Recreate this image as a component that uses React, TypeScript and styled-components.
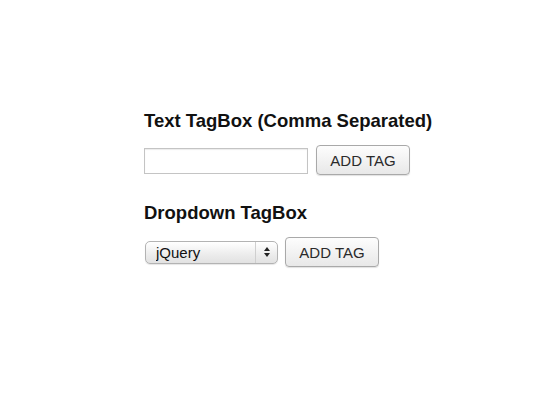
import React from 'react';
import styled, { createGlobalStyle } from 'styled-components';

const GlobalStyle = createGlobalStyle`
  html, body {
    margin: 0;
    padding: 0;
    background: #ffffff;
  }
  body {
    font-family: "Liberation Sans", Arial, Helvetica, sans-serif;
  }
`;

export default function App() {
  return (
    <Page>
      <GlobalStyle />
      <Section>
        <Title>Text TagBox (Comma Separated)</Title>
        <Row>
          <TextInput type="text" />
          <Button $offset={1}>ADD TAG</Button>
        </Row>
      </Section>
      <Section>
        <Title>Dropdown TagBox</Title>
        <Row>
          <SelectWrap>
            <Select defaultValue="jquery">
              <option value="jquery">jQuery</option>
              <option value="react">React</option>
            </Select>
            <Arrows>
              <svg width="8" height="12" viewBox="0 0 8 12">
                <path d="M4 1 L7 5 H1 Z" fill="#222" />
                <path d="M4 11 L7 7 H1 Z" fill="#222" />
              </svg>
            </Arrows>
          </SelectWrap>
          <Button $offset={0}>ADD TAG</Button>
        </Row>
      </Section>
    </Page>
  );
}

const Page = styled.div`
  width: 560px;
  height: 400px;
  box-sizing: border-box;
  padding: 110px 0 0 144px;
  display: flex;
  flex-direction: column;
  gap: 27px;
`;

const Section = styled.div`
  display: flex;
  flex-direction: column;
  gap: 13px;
`;

const Title = styled.h2`
  margin: 0;
  font-size: 18.5px;
  line-height: 22px;
  font-weight: 700;
  color: #111;
`;

const Row = styled.div`
  display: flex;
  align-items: center;
  gap: 7px;
`;

const TextInput = styled.input`
  width: 164px;
  height: 26px;
  margin-top: 1px;
  box-sizing: border-box;
  border: 1px solid #c4c4c4;
  box-shadow: inset 0 1px 1px rgba(0, 0, 0, 0.08);
  padding: 2px 4px;
  font-size: 13px;
  outline: none;
`;

const Button = styled.button<{ $offset: number }>`
  width: 94px;
  height: 30px;
  box-sizing: border-box;
  border: 1px solid #a9a9a9;
  border-radius: 4px;
  background: linear-gradient(#fdfdfd, #e8e8e8);
  box-shadow: 0 1px 1px rgba(0, 0, 0, 0.12);
  font-family: "Liberation Sans", Arial, sans-serif;
  font-size: 15px;
  color: #2a2a2a;
  padding: 0;
  margin-left: ${p => p.$offset}px;
`;

const SelectWrap = styled.div`
  position: relative;
  width: 133px;
  height: 23px;
  margin-left: 1px;
`;

const Select = styled.select`
  appearance: none;
  width: 100%;
  height: 100%;
  box-sizing: border-box;
  border: 1px solid #b3b3b3;
  border-radius: 5px;
  background: linear-gradient(#ffffff, #ececec 60%, #e2e2e2);
  box-shadow: 0 1px 1px rgba(0, 0, 0, 0.1);
  padding: 0 24px 0 10px;
  font-family: "Liberation Sans", Arial, sans-serif;
  font-size: 15px;
  color: #111;
  outline: none;
`;

const Arrows = styled.span`
  position: absolute;
  top: 1px;
  right: 1px;
  bottom: 1px;
  width: 21px;
  border-left: 1px solid #cfcfcf;
  display: flex;
  align-items: center;
  justify-content: center;
  pointer-events: none;
`;
